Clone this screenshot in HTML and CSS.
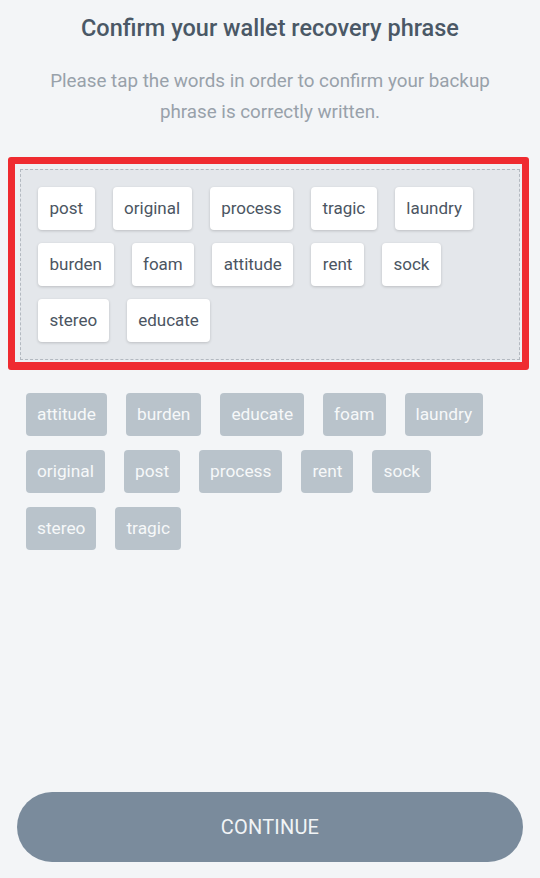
FILE: index.html
```html
<!DOCTYPE html>
<html lang="en">
<head>
  <meta charset="UTF-8" />
  <meta name="viewport" content="width=device-width, initial-scale=1.0"/>
  <title>Confirm recovery phrase</title>
  <link rel="stylesheet" href="styles.css">
</head>
<body>

  <div class="screen">
    <h1 class="title">Confirm your wallet recovery phrase</h1>
    <p class="subtitle">Please tap the words in order to confirm your backup phrase is correctly written.</p>

    <div class="highlight">
      <div class="dropzone">
        <span class="chip">post</span>
        <span class="chip">original</span>
        <span class="chip">process</span>
        <span class="chip">tragic</span>
        <span class="chip">laundry</span>
        <span class="chip">burden</span>
        <span class="chip">foam</span>
        <span class="chip">attitude</span>
        <span class="chip">rent</span>
        <span class="chip">sock</span>
        <span class="chip">stereo</span>
        <span class="chip">educate</span>
      </div>
    </div>

    <div class="wordbank">
      <span class="word">attitude</span>
      <span class="word">burden</span>
      <span class="word">educate</span>
      <span class="word">foam</span>
      <span class="word">laundry</span>
      <span class="word">original</span>
      <span class="word">post</span>
      <span class="word">process</span>
      <span class="word">rent</span>
      <span class="word">sock</span>
      <span class="word">stereo</span>
      <span class="word">tragic</span>
    </div>

    <button class="continue">CONTINUE</button>
  </div>

</body>
</html>
```

FILE: styles.css
```css
body {
  margin: 0;
  padding: 0;
  background: #f3f5f7;
  font-family: Roboto, "Liberation Sans", sans-serif;
}

.screen {
  height: 878px;
  display: flex;
  flex-direction: column;
  box-sizing: border-box;
  padding-top: 13px;
}

.title {
  margin: 0;
  font-size: 23.5px;
  line-height: 30px;
  font-weight: 500;
  color: #4a5866;
  text-align: center;
}

.subtitle {
  margin: 23px 20px 0;
  font-size: 18.8px;
  line-height: 31px;
  color: #98a1aa;
  text-align: center;
}

.highlight {
  margin: 29px 0 0 8px;
  width: 521px;
  box-sizing: border-box;
  border: 7px solid #ef2b30;
  border-bottom-width: 8px;
  border-radius: 3px;
  padding: 5px 2px 2px 5px;
  background: #eef0f3;
}

.dropzone {
  display: flex;
  flex-wrap: wrap;
  gap: 13px 18px;
  padding: 17px;
  border: 1px dashed #b3b9c0;
  background: #e4e7eb;
}

.chip {
  height: 43px;
  line-height: 43px;
  padding: 0 11.5px;
  background: #ffffff;
  border-radius: 4px;
  box-shadow: 0 1px 3px rgba(0, 0, 0, 0.18);
  font-size: 17px;
  color: #4b5562;
}

.wordbank {
  display: flex;
  flex-wrap: wrap;
  gap: 14px 19px;
  padding: 23px 26px 0;
}

.word {
  height: 43px;
  line-height: 43px;
  padding: 0 11px;
  background: #b9c3cb;
  border-radius: 4px;
  font-size: 17.3px;
  color: #f6f8f9;
}

.continue {
  margin: auto 17px 16px;
  height: 70px;
  border: none;
  border-radius: 35px;
  background: #7a8b9c;
  color: #f1f4f6;
  font-family: Roboto, "Liberation Sans", sans-serif;
  font-size: 20px;
  letter-spacing: 0.2px;
}
```
